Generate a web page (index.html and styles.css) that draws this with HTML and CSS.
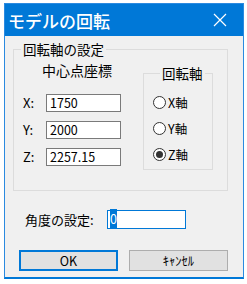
FILE: index.html
```html
<!DOCTYPE html>
<html lang="ja">
<head>
  <meta charset="UTF-8">
  <title>モデルの回転</title>
  <link rel="stylesheet" href="styles.css">
</head>
<body>

  <div class="dialog">
    <div class="titlebar">
      <span class="title">モデルの回転</span>
      <svg class="close" width="14" height="14" viewBox="0 0 14 14">
        <path d="M1 1 L13 13 M13 1 L1 13" stroke="#fff" stroke-width="1.2" fill="none"/>
      </svg>
    </div>

    <div class="content">
      <fieldset class="group main-group">
        <legend>回転軸の設定</legend>
        <div class="group-body">
          <!-- center point -->
          <div class="center">
            <div class="center-title">中心点座標</div>
            <div class="coord-row"><span class="coord-label">X:</span><div class="field">1750</div></div>
            <div class="coord-row"><span class="coord-label">Y:</span><div class="field">2000</div></div>
            <div class="coord-row"><span class="coord-label">Z:</span><div class="field">2257.15</div></div>
          </div>

          <!-- axis -->
          <fieldset class="group axis-group">
            <legend>回転軸</legend>
            <div class="radio-row"><span class="radio"></span>X軸</div>
            <div class="radio-row"><span class="radio"></span>Y軸</div>
            <div class="radio-row"><span class="radio checked"></span>Z軸</div>
          </fieldset>
        </div>
      </fieldset>

      <div class="angle-row">
        <span class="angle-label">角度の設定:</span>
        <div class="field angle-field"><span class="selected">0</span></div>
      </div>

      <div class="buttons">
        <div class="button default">OK</div>
        <div class="button">ｷｬﾝｾﾙ</div>
      </div>
    </div>
  </div>

</body>
</html>
```

FILE: styles.css
```css
/* Basic Reset */
* {
  margin: 0;
  padding: 0;
  box-sizing: border-box;
}

body {
  font-family: "Noto Sans CJK JP", "Noto Sans", sans-serif;
  font-size: 13px;
  color: #000;
  background: #fff;
}

/* Window */
.dialog {
  margin: 3px 0 0 4px;
  width: 240px;
  height: 276px;
  border: 1px solid #2b8ae0;
  border-bottom: 2px solid #0078d7;
  background: #f0f0f0;
  display: flex;
  flex-direction: column;
}

.titlebar {
  height: 32px;
  background: #0078d7;
  color: #fff;
  display: flex;
  align-items: center;
  justify-content: space-between;
  padding: 0 16px 0 3px;
}

.title {
  font-size: 17px;
  font-weight: 500;
}

.content {
  padding: 5px 0 0 8px;
}

/* Group boxes */
.group {
  border: 1px solid #dcdcdc;
  padding: 0;
}

.group legend {
  margin-left: 7px;
  padding: 0 2px;
  line-height: 16px;
  font-size: 13.5px;
}

.main-group {
  width: 215px;
  padding-bottom: 20px;
}

.group-body {
  display: grid;
  grid-template-columns: 129px 70px;
}

.center-title {
  margin-top: 5px;
  line-height: 16px;
  font-size: 14px;
  padding-left: 28px;
  margin-bottom: 15px;
}

.coord-row {
  display: flex;
  align-items: center;
  padding-left: 9px;
  margin-bottom: 8px;
}

.coord-row:last-child {
  margin-bottom: 0;
}

.coord-label {
  width: 23px;
}

.field {
  width: 75px;
  height: 18px;
  background: #fff;
  border: 1px solid #7a7a7a;
  padding-left: 3px;
  line-height: 16px;
  font-size: 12.5px;
}

/* Axis radios */
.axis-group {
  margin-top: 8px;
  padding: 0 0 8px 9px;
  height: 105px;
}

.radio-row {
  display: flex;
  align-items: center;
  height: 16px;
  margin-top: 10px;
  font-size: 12.5px;
}

.radio-row:first-of-type {
  margin-top: 13px;
}

.radio {
  width: 13px;
  height: 13px;
  border: 1px solid #333;
  border-radius: 50%;
  background: #fff;
  margin-right: 2px;
  display: flex;
  align-items: center;
  justify-content: center;
}

.radio.checked::after {
  content: "";
  width: 7px;
  height: 7px;
  border-radius: 50%;
  background: #333;
}

/* Angle */
.angle-row {
  display: flex;
  align-items: center;
  margin-top: 19px;
  padding-left: 12px;
}

.angle-label {
  width: 82px;
}

.angle-field {
  width: 79px;
  height: 19px;
  border-color: #0078d7;
  padding-left: 2px;
}

.selected {
  background: #0078d7;
  color: #fff;
}

/* Buttons */
.buttons {
  display: flex;
  gap: 11px;
  margin-top: 21px;
  padding-left: 6px;
}

.button {
  width: 99px;
  height: 21px;
  background: #e1e1e1;
  border: 1px solid #adadad;
  display: flex;
  align-items: center;
  justify-content: center;
  font-size: 12.5px;
}

.button.default {
  border: 2px solid #0078d7;
}
```
